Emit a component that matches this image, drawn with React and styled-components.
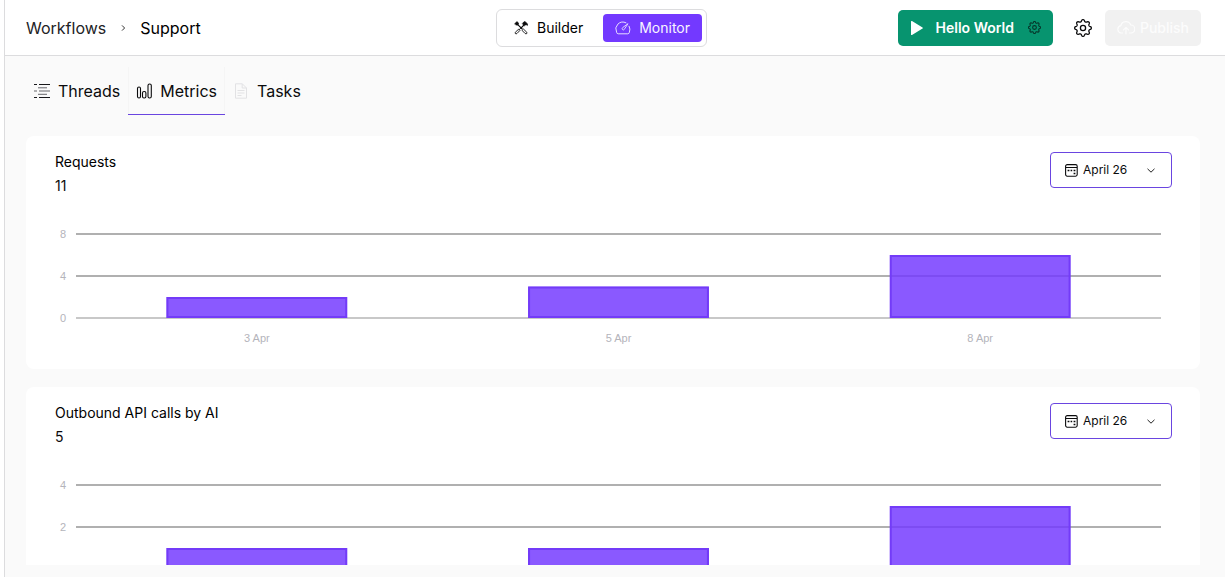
import React, { useState } from 'react'
import styled, { createGlobalStyle } from 'styled-components'

const GlobalStyle = createGlobalStyle`
  * {
    box-sizing: border-box;
  }
  body {
    margin: 0;
    background-color: #fff;
    color: #0b0b0c;
    font-family: Inter, 'Liberation Sans', sans-serif;
  }
  button, select {
    font-family: inherit;
    color: inherit;
  }
`

const Page = styled.div`
  height: 100vh;
  margin-left: 4px;
  border-left: 1px solid #dcdcde;
  background-color: #fafafa;
  display: flex;
  flex-direction: column;
`
const Header = styled.header`
  display: grid;
  grid-template-columns: 1fr auto 1fr;
  align-items: center;
  height: 56px;
  flex-shrink: 0;
  padding: 0 24px 0 21px;
  background-color: #fff;
  border-bottom: 1px solid #dcdcde;
`
const Breadcrumb = styled.nav`
  display: flex;
  align-items: center;
  gap: 14px;
  font-size: 16px;
  line-height: 24px;
`
const Crumb = styled.a`
  color: ${(props) => (props.$current ? '#000' : '#222225')};
  text-decoration: none;
`
const Switcher = styled.div`
  display: flex;
  gap: 8px;
  margin-right: 24px;
  padding: 4px;
  border: 1px solid #dcdcde;
  border-radius: 6px;
`
const SwitchButton = styled.button`
  display: flex;
  align-items: center;
  gap: 8px;
  height: 28px;
  padding: 0 12px;
  border: 0;
  border-radius: 4px;
  font-size: 14px;
  font-weight: 400;
  cursor: pointer;
  background-color: ${(props) => (props.$active ? '#7339ff' : 'transparent')};
  color: ${(props) => (props.$active ? '#f8f5ff' : '#000')};
`
const Actions = styled.div`
  display: flex;
  align-items: center;
  justify-content: flex-end;
`
const RunButton = styled.button`
  display: flex;
  align-items: center;
  height: 36px;
  padding: 0 12px;
  border: 0;
  border-radius: 5px;
  background-color: #07946f;
  color: #fff;
  font-size: 14px;
  font-weight: 600;
  cursor: pointer;
`
const RunLabel = styled.span`
  margin: 0 14px 0 12px;
`
const IconButton = styled.button`
  display: flex;
  margin: 0 13px 0 21px;
  padding: 0;
  border: 0;
  background: none;
  cursor: pointer;
`
const PublishButton = styled.button`
  display: flex;
  align-items: center;
  gap: 5px;
  height: 36px;
  padding: 0 12px;
  border: 0;
  border-radius: 5px;
  background-color: #f1f1f1;
  font-size: 14px;
  font-weight: 500;
  && {
    color: #fcfcfc;
  }
`
const Main = styled.main`
  flex: 1;
  min-height: 0;
  display: flex;
  flex-direction: column;
  padding: 11px 25px 12px 21px;
`
const Tabs = styled.div`
  display: flex;
  flex-shrink: 0;
  margin-bottom: 21px;
`
const Tab = styled.button`
  display: flex;
  align-items: center;
  gap: 8px;
  height: 48px;
  padding: 0 8px;
  border: 0;
  border-bottom: 1px solid ${(props) => (props.$active ? '#6a45e0' : 'transparent')};
  box-shadow: ${(props) => (props.$active ? 'inset 1px 0 #f5f5f5, inset -1px 0 #f5f5f5' : 'none')};
  background: none;
  font-size: 16px;
  cursor: pointer;
`
const Cards = styled.div`
  flex: 1;
  min-height: 0;
  overflow-y: auto;
  scrollbar-width: none;
  display: flex;
  flex-direction: column;
  gap: 18px;
`
const Card = styled.section`
  flex-shrink: 0;
  padding: 16px 28px 23px 29px;
  border-radius: 8px;
  background-color: #fff;
`
const CardHeader = styled.div`
  display: flex;
  justify-content: space-between;
  align-items: flex-start;
  margin-bottom: 32px;
`
const CardTitle = styled.h2`
  margin: 0 0 4px;
  font-size: 14px;
  font-weight: 400;
  line-height: 20px;
  color: #000;
`
const CardValue = styled.p`
  margin: 0;
  font-size: 14px;
  line-height: 20px;
`
const MonthField = styled.label`
  display: flex;
  align-items: center;
  gap: 5px;
  width: 122px;
  height: 36px;
  padding: 0 14px;
  border: 1px solid #6a45e0;
  border-radius: 4px;
  background-color: #fff;
`
const MonthSelect = styled.select`
  flex: 1;
  min-width: 0;
  appearance: none;
  padding: 0;
  border: 0;
  outline: 0;
  background: none;
  font-size: 12px;
  line-height: 20px;
`
const Chart = styled.div`
  display: flex;
  gap: 10px;
  padding-right: 11px;
  font-family: 'Liberation Sans', Arial, sans-serif;
  font-size: 11px;
  color: #b4b4bb;
`
const YAxis = styled.div`
  display: flex;
  flex-direction: column;
  justify-content: space-between;
  width: 11px;
  height: 96px;
  text-align: right;
  line-height: 12px;
`
const Plot = styled.div`
  flex: 1;
  min-width: 0;
`
const PlotSvg = styled.svg`
  display: block;
  width: 100%;
  height: 96px;
`
const XAxis = styled.div`
  display: flex;
  margin-top: 6px;
  line-height: 16px;
  text-align: center;
`
const XLabel = styled.span`
  flex: 1;
`

// rounded eight-lobe outline for the cog
const gearPath = () => {
  const points = []
  for (let i = 0; i < 96; i++) {
    const a = (i / 96) * Math.PI * 2
    const wave = Math.tanh(1.6 * Math.cos(a * 8)) / Math.tanh(1.6)
    const r = 7.4 + wave * 0.95
    points.push(`${(9 + r * Math.sin(a)).toFixed(2)} ${(9 - r * Math.cos(a)).toFixed(2)}`)
  }
  return `M${points.join('L')}Z`
}
const GEAR = gearPath()

const GearIcon = ({ size, color = '#0b0b0c' }) => (
  <svg width={size} height={size} viewBox="0 0 18 18" fill="none" stroke={color} strokeWidth={size > 16 ? 1.3 : 1.5} strokeLinejoin="round">
    <path d={GEAR} />
    <circle cx="9" cy="9" r="2.6" />
  </svg>
)
const ChevronRight = () => (
  <svg width="6" height="8" viewBox="0 0 6 8" fill="none" stroke="#333" strokeWidth="1">
    <path d="M2 1.4 4.6 4 2 6.6" />
  </svg>
)
const ChevronDown = () => (
  <svg width="12" height="12" viewBox="0 0 12 12" fill="none" stroke="#222" strokeWidth="1" pointerEvents="none">
    <path d="M2.5 4.8 6 8.2l3.5-3.4" />
  </svg>
)
const ToolsIcon = () => (
  <svg width="16" height="16" viewBox="0 0 16 16" fill="none" stroke="#0b0b0c" strokeLinecap="round" strokeLinejoin="round">
    <path d="M1.8 3.6 4 1.6l1.6 1.5-.3 1.4-1 .7-1.2-.3Z" fill="#0b0b0c" strokeWidth=".6" />
    <path d="M4.8 4.6 9.2 9" strokeWidth="1.1" />
    <path d="m9.4 10.2 1.1-1.1 3.3 3.2a1 1 0 0 1-1.4 1.4Z" strokeWidth=".9" />
    <path d="M8.4 7.6 10.6 5.4" strokeWidth="1.3" />
    <path d="m6.6 10.2-1-1-3.3 3.1a1 1 0 0 0 1.4 1.4ZM6.1 9.7l2.3-2.1" strokeWidth=".9" />
    <path d="M9.6 3.2 11.2 1.6l1.3.3 2.1 2-.2 1.6-1-.7-1 .2-1 .8L9.9 4.5Z" fill="#0b0b0c" strokeWidth=".6" />
  </svg>
)
const GaugeIcon = () => (
  <svg width="16" height="16" viewBox="0 0 16 16" fill="none" stroke="#e6dcff" strokeWidth="1" strokeLinecap="round" strokeLinejoin="round">
    <path d="M11 2.8A7 7 0 0 0 1.6 12.2q.3 1.6 1.6 1.6h9.6q1.3 0 1.6-1.6a7 7 0 0 0-.3-6" />
    <path d="m12.8 4-3.6 5.5a1.2 1.2 0 1 1-1.8-1.6Z" strokeWidth=".9" />
  </svg>
)
const PlayIcon = () => (
  <svg width="14" height="16" viewBox="0 0 14 16" fill="#fff">
    <path d="M1 1.6v12.8c0 .6.5.8 1 .5l10.5-6.3c.5-.3.5-.9 0-1.2L2 1.1c-.5-.3-1-.1-1 .5Z" />
  </svg>
)
const CloudIcon = () => (
  <svg width="18" height="16" viewBox="1 0 18 16" fill="none" stroke="#fcfcfc" strokeWidth="1.2" strokeLinecap="round" strokeLinejoin="round">
    <path d="M6.5 13H5.2a3.7 3.7 0 0 1-.4-7.3A5.2 5.2 0 0 1 14.8 5a4 4 0 0 1 0 8h-1.3" />
    <path d="M10 14V7.5M7.5 9.8 10 7.3l2.5 2.5" />
  </svg>
)
const ThreadsIcon = () => (
  <svg width="16" height="16" viewBox="0 0 16 16" fill="none" stroke="#18181b" strokeWidth="1">
    <path d="M0 1.5h3M5 1.5h11M0 14.5h3M5 14.5h11" />
    <path d="M0 8h3M5 8h11M4 4.8h9M4 11.3h9" stroke="#66666b" />
  </svg>
)
const MetricsIcon = () => (
  <svg width="16" height="16" viewBox="0 0 16 16" fill="none" stroke="#0b0b0c" strokeWidth="1.1">
    <rect x="1.5" y="4" width="3" height="11" rx="1.5" />
    <rect x="6.5" y="8.5" width="3.4" height="6.5" rx="1.5" />
    <rect x="12" y="1" width="3.3" height="14" rx="1.6" />
  </svg>
)
const TasksIcon = () => (
  <svg width="16" height="16" viewBox="0 0 16 16" fill="none" stroke="#e2e2e4" strokeWidth="1">
    <path d="M2.5.8h6.8l4.2 4.2v10.2h-11ZM9.2.8V5h4.3M4.5 7.5h7M4.5 10h7M4.5 12.5h4" />
  </svg>
)
const CalendarIcon = () => (
  <svg width="13" height="13" viewBox="0 0 13 13" fill="none" stroke="#0b0b0c" strokeWidth="1.1">
    <rect x=".6" y=".6" width="11.6" height="11.6" rx="1.6" />
    <path d="M1 3.5h11" strokeWidth="1" />
    <path d="M2.6 6.5h1.8M5.6 6.5h1.6M8.6 6.5h1.8M8.6 9.5h1.8" strokeWidth="1.6" />
  </svg>
)

const charts = [
  {
    title: 'Requests',
    total: 11,
    ticks: [8, 4, 0],
    data: [
      { day: '3 Apr', value: 2 },
      { day: '5 Apr', value: 3 },
      { day: '8 Apr', value: 6 },
    ],
  },
  {
    title: 'Outbound API calls by AI',
    total: 5,
    ticks: [4, 2, 0],
    data: [
      { day: '3 Apr', value: 1 },
      { day: '5 Apr', value: 1 },
      { day: '8 Apr', value: 3 },
    ],
  },
]

const BarChart = ({ ticks, data }) => {
  const base = 90
  const scale = 84 / ticks[0]
  const step = 100 / data.length

  return (
    <Chart>
      <YAxis>
        {ticks.map((tick) => (
          <span key={tick}>{tick}</span>
        ))}
      </YAxis>
      <Plot>
        <PlotSvg>
          {ticks.map((tick) => (
            <line
              key={tick}
              x1="0"
              x2="100%"
              y1={base - tick * scale}
              y2={base - tick * scale}
              stroke={tick === 0 ? '#c8c8c8' : '#b0b0b0'}
              strokeWidth="2"
            />
          ))}
          {/* the nested svg clips the stroke so the border stays inside the bar */}
          {data.map((item, i) => (
            <svg
              key={item.day}
              x={`${step * (i + 0.25)}%`}
              y={base - item.value * scale}
              width={`${step / 2}%`}
              height={item.value * scale}
            >
              <rect width="100%" height="100%" fill="#7339ff" fillOpacity="0.84" stroke="#733bf8" strokeWidth="4" />
            </svg>
          ))}
        </PlotSvg>
        <XAxis>
          {data.map((item) => (
            <XLabel key={item.day}>{item.day}</XLabel>
          ))}
        </XAxis>
      </Plot>
    </Chart>
  )
}

const MetricCard = ({ chart }) => {
  const [month, setMonth] = useState('April 26')

  return (
    <Card>
      <CardHeader>
        <div>
          <CardTitle>{chart.title}</CardTitle>
          <CardValue>{chart.total}</CardValue>
        </div>
        <MonthField>
          <CalendarIcon />
          <MonthSelect aria-label="Month" value={month} onChange={(e) => setMonth(e.target.value)}>
            <option>April 26</option>
          </MonthSelect>
          <ChevronDown />
        </MonthField>
      </CardHeader>
      <BarChart ticks={chart.ticks} data={chart.data} />
    </Card>
  )
}

const tabs = [
  { name: 'Threads', icon: <ThreadsIcon /> },
  { name: 'Metrics', icon: <MetricsIcon /> },
  { name: 'Tasks', icon: <TasksIcon /> },
]

const App = () => {
  const [tab, setTab] = useState('Metrics')
  const [mode, setMode] = useState('Monitor')

  return (
    <>
      <GlobalStyle />
      <Page>
        <Header>
          <Breadcrumb>
            <Crumb href="#workflows">Workflows</Crumb>
            <ChevronRight />
            <Crumb href="#support" $current>Support</Crumb>
          </Breadcrumb>
          <Switcher>
            <SwitchButton $active={mode === 'Builder'} onClick={() => setMode('Builder')}>
              <ToolsIcon />
              Builder
            </SwitchButton>
            <SwitchButton $active={mode === 'Monitor'} onClick={() => setMode('Monitor')}>
              <GaugeIcon />
              Monitor
            </SwitchButton>
          </Switcher>
          <Actions>
            <RunButton>
              <PlayIcon />
              <RunLabel>Hello World</RunLabel>
              <GearIcon size={13} color="#06352a" />
            </RunButton>
            <IconButton aria-label="Settings">
              <GearIcon size={18} />
            </IconButton>
            <PublishButton disabled>
              <CloudIcon />
              Publish
            </PublishButton>
          </Actions>
        </Header>
        <Main>
          <Tabs role="tablist">
            {tabs.map((item) => (
              <Tab
                key={item.name}
                role="tab"
                aria-selected={tab === item.name}
                $active={tab === item.name}
                onClick={() => setTab(item.name)}
              >
                {item.icon}
                {item.name}
              </Tab>
            ))}
          </Tabs>
          <Cards>
            {charts.map((chart) => (
              <MetricCard key={chart.title} chart={chart} />
            ))}
          </Cards>
        </Main>
      </Page>
    </>
  )
}

export default App
